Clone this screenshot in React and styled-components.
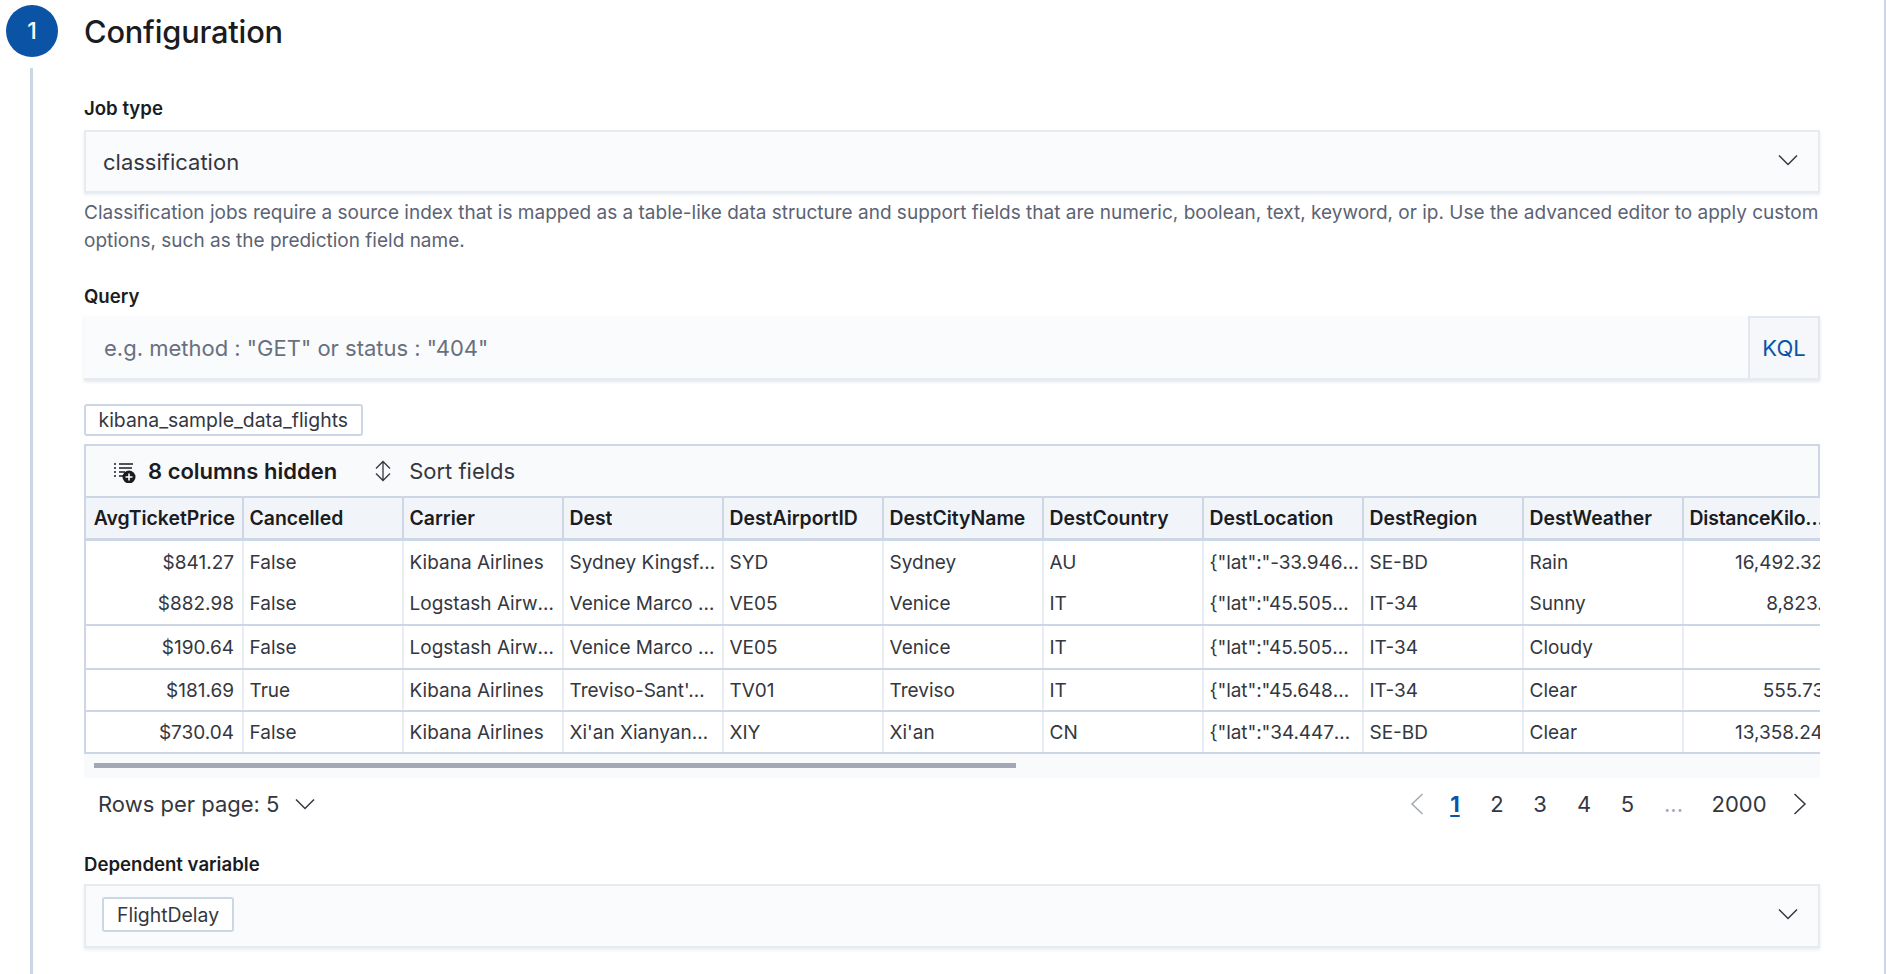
import React from "react";
import styled, { createGlobalStyle } from "styled-components";

const Global = createGlobalStyle`
  html, body { margin: 0; padding: 0; background: #fff; }
  body { font-family: Inter, "Noto Sans", sans-serif; color: #343741; }
`;

const Page = styled.div`
  width: 1886px; height: 974px; overflow: hidden; box-sizing: border-box;
  border-right: 2px solid #cdd6e5; background: #fff;
`;
const StepHeader = styled.div`
  display: flex; align-items: center; height: 62px; padding-left: 6px; gap: 26px;
`;
const StepCircle = styled.div`
  width: 52px; height: 52px; border-radius: 50%; background: #0b54a5; color: #fff;
  display: flex; align-items: center; justify-content: center; font-size: 23px; font-weight: 500;
`;
const Title = styled.h2`
  margin: 2px 0 0; font-size: 30.8px; font-weight: 500; color: #1a1c21; letter-spacing: -0.2px; line-height: 40px;
`;
const StepBody = styled.div`
  margin: 6px 0 0 30px; border-left: 3px solid #cdd6e5; padding: 27px 64px 0 51px; height: 906px; box-sizing: border-box;
`;
const Label = styled.div`
  font-size: 18.6px; line-height: 26px; font-weight: 600; color: #1a1c21; height: 24px; margin-bottom: ${p => p.$mb}px;
`;
const IndexBadge = styled.span`
  display: inline-flex; align-items: center; box-sizing: border-box; height: ${p => p.$h}px;
  padding: 0 ${p => p.$px}px; background: #fff; border: 2px solid #cdd6e5; border-radius: 3px;
  font-size: 19.4px; color: #343741;
`;
const SelectBox = styled.div`
  height: ${p => p.$h}px; box-sizing: border-box; background: #fafbfd; border: 2px solid #e6eaf1;
  box-shadow: 0 2px 3px rgba(152,162,179,0.2); display: flex; align-items: center; justify-content: space-between;
  padding: 0 20px 0 ${p => p.$pl}px;
  ${IndexBadge} { margin-bottom: 3px; }
`;
const SelectText = styled.span`
  font-size: 22px; color: #343741;
`;
const Help = styled.p`
  margin: 6px 0 28px; font-size: 19px; line-height: 28px; color: #5c6373; white-space: nowrap; height: 56px;
`;
const QueryBar = styled.div`
  display: flex; height: 64px; background: #fafbfd; box-shadow: 0 2px 3px rgba(152,162,179,0.25);
  border-bottom: 2px solid #e6eaf1;
  box-sizing: border-box;
`;
const QueryInput = styled.div`
  flex: 1; display: flex; align-items: center; padding: 2px 0 0 20px; font-size: 22px; color: #69707d;
`;
const KqlButton = styled.div`
  width: 72px; box-sizing: border-box; background: #f5f7fa; border: 2px solid #e3e8f0; border-bottom: none;
  display: flex; align-items: center; justify-content: center; color: #0b54a5; font-size: 22px;
`;
const BadgeRow = styled.div`
  margin-top: 24px; height: 32px; display: flex;
`;
const Grid = styled.div`
  margin-top: 8px; width: 100%; overflow: hidden; background: #f9fafc;
`;
const Toolbar = styled.div`
  height: 53px; box-sizing: border-box; border: 2px solid #cdd6e5; border-bottom-width: 1px;
  background: #f9fafc; display: flex; align-items: center; padding-left: 27px;
`;
const ToolButton = styled.div`
  display: flex; align-items: center; gap: ${p => p.$gap}px; margin-right: ${p => p.$mr}px; font-size: 22px;
  font-weight: ${p => p.$bold ? 600 : 400}; color: ${p => p.$bold ? "#1a1c21" : "#343741"};
`;
const TableWrap = styled.div`
  width: 100%; overflow: hidden; border-left: 2px solid #cdd6e5; box-sizing: border-box;
`;
const Row = styled.div`
  display: grid; grid-template-columns: 158px repeat(10, 160px); width: 1758px; height: ${p => p.$h}px;
  box-sizing: border-box; background: #fff;
  border-bottom: ${p => p.$line ? "2px solid #cdd6e5" : "none"};
`;
const HeaderRow = styled(Row)`
  background: #f1f4f9; border-top: 1px solid #cdd6e5; border-bottom: 3px solid #cdd6e5;
`;
const HeadCell = styled.div`
  display: flex; align-items: center; padding: 0 7px 0 5.5px; font-size: 19.4px; font-weight: 600; color: #1a1c21;
  justify-content: ${p => p.$right ? "flex-end" : "flex-start"};
  border-right: 2px solid #cdd6e5; box-sizing: border-box; white-space: nowrap; overflow: hidden;
  span { overflow: hidden; text-overflow: ellipsis; }
  &:last-child { width: 150px; border-right: none; padding-right: 0; letter-spacing: -0.2px; }
`;
const Cell = styled.div`
  display: flex; align-items: center; justify-content: ${p => p.$right ? "flex-end" : "flex-start"};
  padding: 0 ${p => p.$pr}px 0 5.5px; font-size: 19px; color: #343741; box-sizing: border-box;
  letter-spacing: ${p => p.$tight ? "-0.1px" : "normal"};
  border-right: 2px solid #e9edf4; white-space: nowrap; overflow: hidden;
  span { overflow: hidden; text-overflow: ellipsis; }
  &:last-child { padding-right: 7px; }
`;
const ScrollArea = styled.div`
  height: 24px; background: #f9fafc; padding: 9px 0 0 10px; box-sizing: border-box;
`;
const ScrollThumb = styled.div`
  width: 922px; height: 5px; background: #a2a9b5;
`;
const Footer = styled.div`
  display: flex; align-items: center; justify-content: space-between; height: 52px; padding: 0 0 0 14px;
`;
const RowsPerPage = styled.div`
  display: flex; align-items: center; gap: 16px; font-size: 22px; color: #343741;
  svg { margin-top: 3px; }
`;
const Pagination = styled.div`
  display: flex; align-items: center;
`;
const PageItem = styled.span`
  width: ${p => p.$w}px; text-align: center; font-size: 22px;
  color: ${p => p.$active ? "#0b54a5" : p.$muted ? "#a2a9b5" : "#343741"};
  font-weight: ${p => p.$active ? 700 : 400};
  text-decoration: ${p => p.$active ? "underline" : "none"};
  text-underline-offset: 3px;
`;
const DependentLabelWrap = styled.div`
  margin-top: 21px;
`;
const PagerIcon = styled.span`
  display: inline-flex; justify-content: center; width: ${p => p.$w}px;
`;

const ChevronDown = () => (
  <svg width="20" height="20" viewBox="0 0 20 20" fill="none" stroke="#343741" strokeWidth="1.5">
    <path d="M1 3.5 10 12.5 19 3.5" />
  </svg>
);

const ChevronSide = ({ color = "#343741", dir }) => (
  <svg width="14" height="22" viewBox="0 0 14 22" fill="none" stroke={color} strokeWidth="1.5">
    <path d={dir === "left" ? "M12.5 1 2 11l10.5 10" : "M1.5 1 12 11 1.5 21"} />
  </svg>
);

const ColumnsIcon = () => (
  <svg width="24" height="24" viewBox="0 0 24 24" fill="none">
    <path d="M1 5h2M1 9h2M1 13h2M1 17h2M6 5h14M6 9h13M6 13h6M6 17h4" stroke="#1a1c21" strokeWidth="1.5" />
    <circle cx="16" cy="18" r="6.5" fill="#1a1c21" />
    <path d="M16 14.5v7M12.5 18h7" stroke="#fff" strokeWidth="1.6" />
  </svg>
);

const SortIcon = () => (
  <svg width="16" height="24" viewBox="0 0 16 24" fill="none" stroke="#343741" strokeWidth="1.3">
    <path d="M1 9.5 8 2.5l7 7M8 2.5v19M1 14.5 8 21.5l7-7" />
  </svg>
);

const columns = ["AvgTicketPrice","Cancelled","Carrier","Dest","DestAirportID","DestCityName","DestCountry","DestLocation","DestRegion","DestWeather","DistanceKilometers"];
const rows = [
  { h: 42, line: false, c: ["$841.27","False","Kibana Airlines","Sydney Kingsford Smith","SYD","Sydney","AU",'{"lat":"-33.946111"}',"SE-BD","Rain","16,492.326"] },
  { h: 43, line: true, c: ["$882.98","False","Logstash Airways","Venice Marco Polo","VE05","Venice","IT",'{"lat":"45.505299"}',"IT-34","Sunny","8,823.4"] },
  { h: 44, line: true, c: ["$190.64","False","Logstash Airways","Venice Marco Polo","VE05","Venice","IT",'{"lat":"45.505299"}',"IT-34","Cloudy","0"] },
  { h: 42, line: true, c: ["$181.69","True","Kibana Airlines","Treviso-Sant'Angelo","TV01","Treviso","IT",'{"lat":"45.648399"}',"IT-34","Clear","555.737"] },
  { h: 42, line: true, c: ["$730.04","False","Kibana Airlines","Xi'an Xianyang Intl","XIY","Xi'an","CN",'{"lat":"34.447102"}',"SE-BD","Clear","13,358.244"] },
];
const rightCols = new Set([0, 10]);
const cellPad = (j, v) => {
  if (j === 0) return 8;
  if (j === 3) return 5;
  if (j === 7) return v.includes("-") ? 0 : 6;
  return 4;
};

export default function App() {
  return (
    <Page>
      <Global />
      <StepHeader>
        <StepCircle>1</StepCircle>
        <Title>Configuration</Title>
      </StepHeader>
      <StepBody>
        <Label $mb={11}>Job type</Label>
        <SelectBox $h={63} $pl={17}>
          <SelectText>classification</SelectText>
          <ChevronDown />
        </SelectBox>
        <Help>
          Classification jobs require a source index that is mapped as a table-like data structure and support fields that are numeric, boolean, text, keyword, or ip. Use the advanced editor to apply custom<br />
          options, such as the prediction field name.
        </Help>
        <Label $mb={9}>Query</Label>
        <QueryBar>
          <QueryInput>e.g. method : "GET" or status : "404"</QueryInput>
          <KqlButton>KQL</KqlButton>
        </QueryBar>
        <BadgeRow>
          <IndexBadge $h={32} $px={12.5}>kibana_sample_data_flights</IndexBadge>
        </BadgeRow>
        <Grid>
          <Toolbar>
            <ToolButton $bold $gap={11} $mr={38}><ColumnsIcon />8 columns hidden</ToolButton>
            <ToolButton $gap={18}><SortIcon />Sort fields</ToolButton>
          </Toolbar>
          <TableWrap>
            <HeaderRow $h={44}>
              {columns.map((c, j) => <HeadCell key={c} $right={j === 0}><span>{c}</span></HeadCell>)}
            </HeaderRow>
            {rows.map((r, i) => (
              <Row key={i} $h={r.h} $line={r.line}>
                {r.c.map((v, j) => (
                  <Cell key={j} $right={rightCols.has(j)} $pr={cellPad(j, v)} $tight={j === 7}><span>{v}</span></Cell>
                ))}
              </Row>
            ))}
          </TableWrap>
          <ScrollArea><ScrollThumb /></ScrollArea>
        </Grid>
        <Footer>
          <RowsPerPage>Rows per page: 5 <ChevronDown /></RowsPerPage>
          <Pagination>
            <PagerIcon $w={34}><ChevronSide color="#a2a9b5" dir="left" /></PagerIcon>
            <PageItem $w={42} $active>1</PageItem>
            <PageItem $w={42}>2</PageItem>
            <PageItem $w={44}>3</PageItem>
            <PageItem $w={44}>4</PageItem>
            <PageItem $w={43}>5</PageItem>
            <PageItem $w={49} $muted>...</PageItem>
            <PageItem $w={82}>2000</PageItem>
            <PagerIcon $w={40}><ChevronSide dir="right" /></PagerIcon>
          </Pagination>
        </Footer>
        <DependentLabelWrap>
          <Label $mb={9}>Dependent variable</Label>
        </DependentLabelWrap>
        <SelectBox $h={64} $pl={16}>
          <IndexBadge $h={35} $px={13}>FlightDelay</IndexBadge>
          <ChevronDown />
        </SelectBox>
      </StepBody>
    </Page>
  );
}
